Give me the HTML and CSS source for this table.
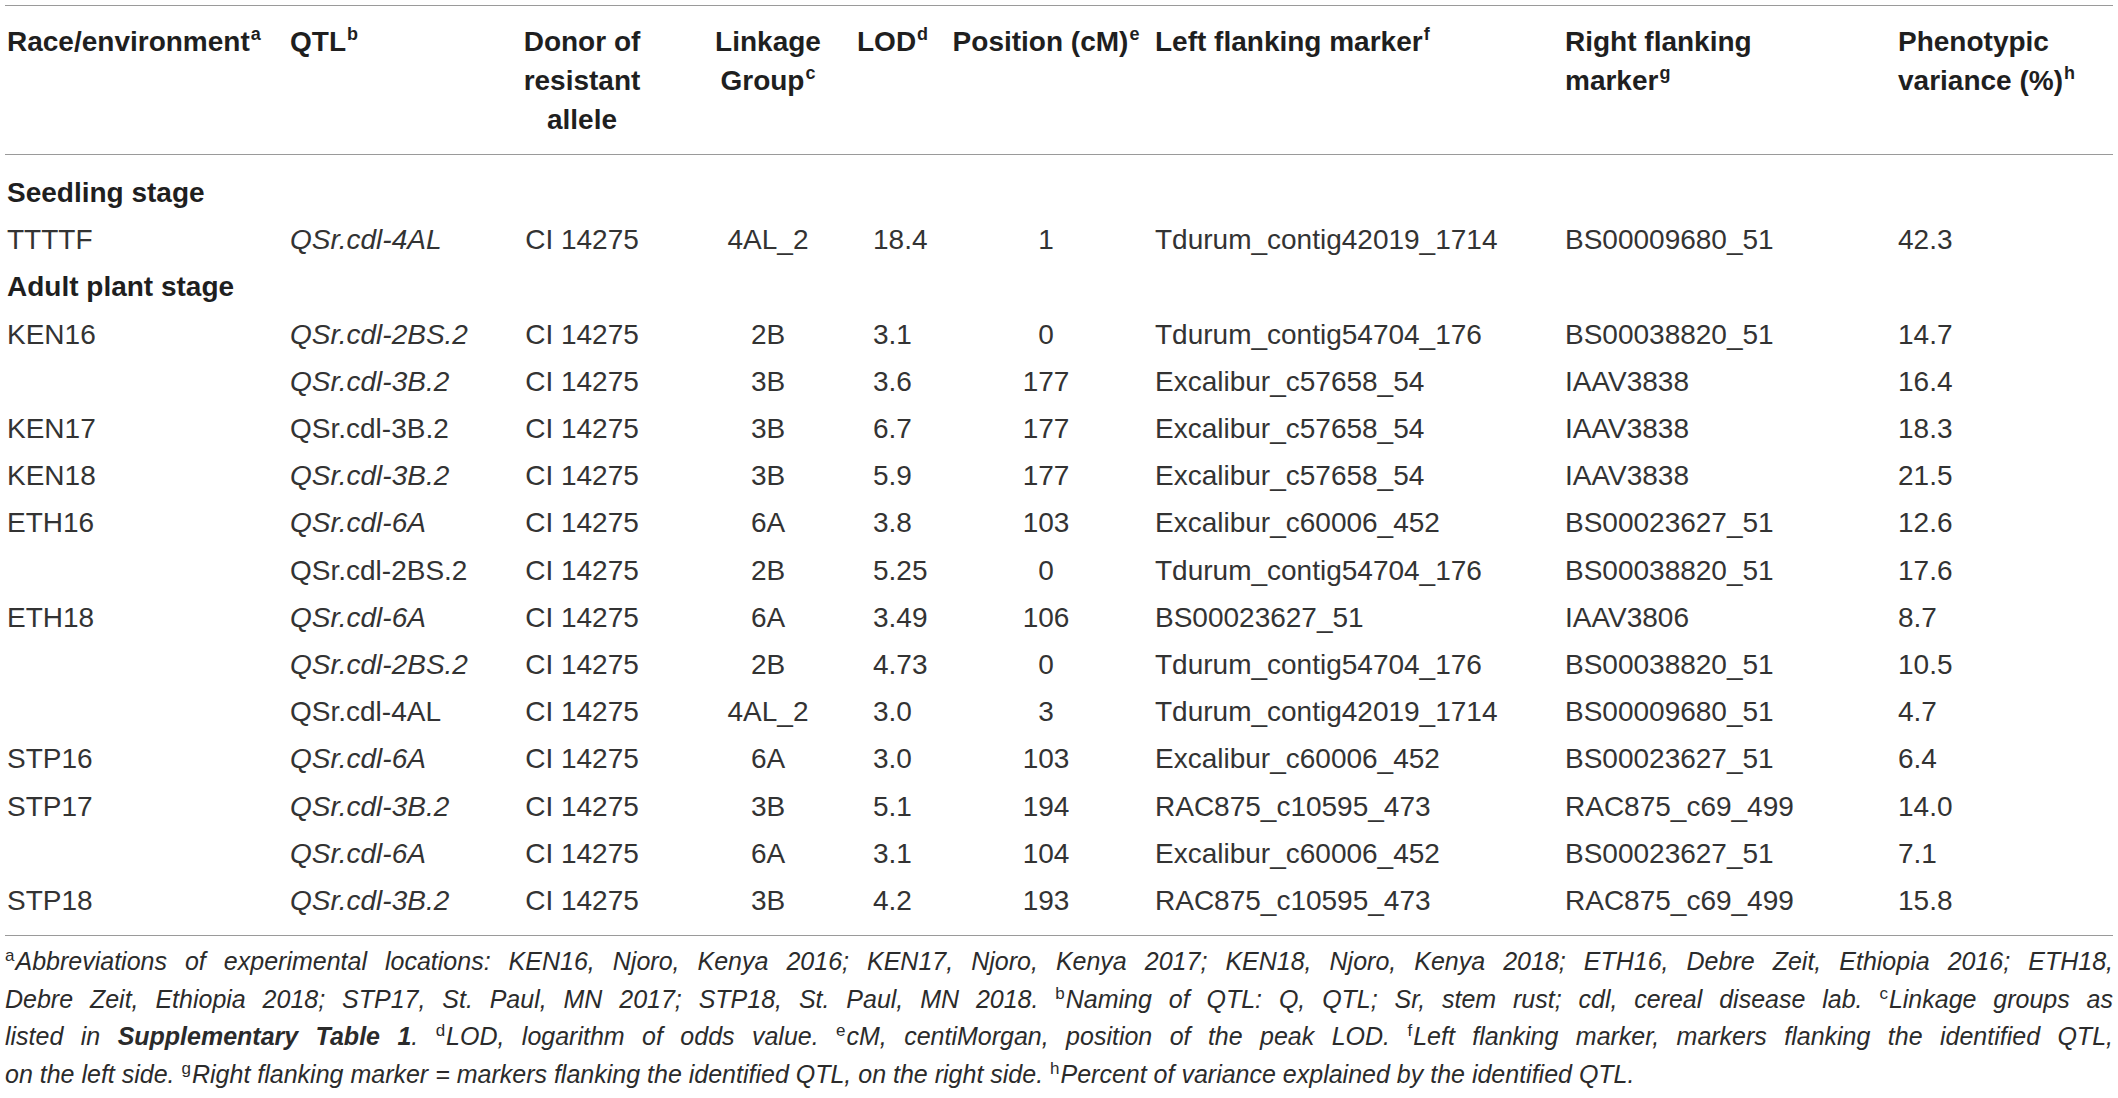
FILE: index.html
```html
<!DOCTYPE html>
<html>
  <head>
    <title>QTL for stem rust resistance</title>
    <link rel="stylesheet" href="styles.css">
  </head>
  <body>
    <table class="qtl">
      <colgroup>
        <col class="c-race">
        <col class="c-qtl">
        <col class="c-donor">
        <col class="c-group">
        <col class="c-lod">
        <col class="c-pos">
        <col class="c-left">
        <col class="c-right">
        <col class="c-var">
      </colgroup>
      <thead>
        <tr>
          <th class="race">Race/environment<sup>a</sup></th>
          <th class="qtlname">QTL<sup>b</sup></th>
          <th class="donor">Donor of<br>resistant<br>allele</th>
          <th class="group">Linkage<br>Group<sup>c</sup></th>
          <th class="lod">LOD<sup>d</sup></th>
          <th class="pos">Position (cM)<sup>e</sup></th>
          <th>Left flanking marker<sup>f</sup></th>
          <th>Right flanking<br>marker<sup>g</sup></th>
          <th>Phenotypic<br>variance (%)<sup>h</sup></th>
        </tr>
      </thead>
      <tbody>
        <tr class="first section"><td colspan="9" class="race">Seedling stage</td></tr>
        <tr>
          <td class="race">TTTTF</td><td class="qtlname"><i>QSr.cdl-4AL</i></td><td class="donor">CI 14275</td><td class="group">4AL_2</td><td class="lod">18.4</td><td class="pos">1</td><td>Tdurum_contig42019_1714</td><td>BS00009680_51</td><td>42.3</td>
        </tr>
        <tr class="section"><td colspan="9" class="race">Adult plant stage</td></tr>
        <tr>
          <td class="race">KEN16</td><td class="qtlname"><i>QSr.cdl-2BS.2</i></td><td class="donor">CI 14275</td><td class="group">2B</td><td class="lod">3.1</td><td class="pos">0</td><td>Tdurum_contig54704_176</td><td>BS00038820_51</td><td>14.7</td>
        </tr>
        <tr>
          <td class="race"></td><td class="qtlname"><i>QSr.cdl-3B.2</i></td><td class="donor">CI 14275</td><td class="group">3B</td><td class="lod">3.6</td><td class="pos">177</td><td>Excalibur_c57658_54</td><td>IAAV3838</td><td>16.4</td>
        </tr>
        <tr>
          <td class="race">KEN17</td><td class="qtlname">QSr.cdl-3B.2</td><td class="donor">CI 14275</td><td class="group">3B</td><td class="lod">6.7</td><td class="pos">177</td><td>Excalibur_c57658_54</td><td>IAAV3838</td><td>18.3</td>
        </tr>
        <tr>
          <td class="race">KEN18</td><td class="qtlname"><i>QSr.cdl-3B.2</i></td><td class="donor">CI 14275</td><td class="group">3B</td><td class="lod">5.9</td><td class="pos">177</td><td>Excalibur_c57658_54</td><td>IAAV3838</td><td>21.5</td>
        </tr>
        <tr>
          <td class="race">ETH16</td><td class="qtlname"><i>QSr.cdl-6A</i></td><td class="donor">CI 14275</td><td class="group">6A</td><td class="lod">3.8</td><td class="pos">103</td><td>Excalibur_c60006_452</td><td>BS00023627_51</td><td>12.6</td>
        </tr>
        <tr>
          <td class="race"></td><td class="qtlname">QSr.cdl-2BS.2</td><td class="donor">CI 14275</td><td class="group">2B</td><td class="lod">5.25</td><td class="pos">0</td><td>Tdurum_contig54704_176</td><td>BS00038820_51</td><td>17.6</td>
        </tr>
        <tr>
          <td class="race">ETH18</td><td class="qtlname"><i>QSr.cdl-6A</i></td><td class="donor">CI 14275</td><td class="group">6A</td><td class="lod">3.49</td><td class="pos">106</td><td>BS00023627_51</td><td>IAAV3806</td><td>8.7</td>
        </tr>
        <tr>
          <td class="race"></td><td class="qtlname"><i>QSr.cdl-2BS.2</i></td><td class="donor">CI 14275</td><td class="group">2B</td><td class="lod">4.73</td><td class="pos">0</td><td>Tdurum_contig54704_176</td><td>BS00038820_51</td><td>10.5</td>
        </tr>
        <tr>
          <td class="race"></td><td class="qtlname">QSr.cdl-4AL</td><td class="donor">CI 14275</td><td class="group">4AL_2</td><td class="lod">3.0</td><td class="pos">3</td><td>Tdurum_contig42019_1714</td><td>BS00009680_51</td><td>4.7</td>
        </tr>
        <tr>
          <td class="race">STP16</td><td class="qtlname"><i>QSr.cdl-6A</i></td><td class="donor">CI 14275</td><td class="group">6A</td><td class="lod">3.0</td><td class="pos">103</td><td>Excalibur_c60006_452</td><td>BS00023627_51</td><td>6.4</td>
        </tr>
        <tr>
          <td class="race">STP17</td><td class="qtlname"><i>QSr.cdl-3B.2</i></td><td class="donor">CI 14275</td><td class="group">3B</td><td class="lod">5.1</td><td class="pos">194</td><td>RAC875_c10595_473</td><td>RAC875_c69_499</td><td>14.0</td>
        </tr>
        <tr>
          <td class="race"></td><td class="qtlname"><i>QSr.cdl-6A</i></td><td class="donor">CI 14275</td><td class="group">6A</td><td class="lod">3.1</td><td class="pos">104</td><td>Excalibur_c60006_452</td><td>BS00023627_51</td><td>7.1</td>
        </tr>
        <tr class="last">
          <td class="race">STP18</td><td class="qtlname"><i>QSr.cdl-3B.2</i></td><td class="donor">CI 14275</td><td class="group">3B</td><td class="lod">4.2</td><td class="pos">193</td><td>RAC875_c10595_473</td><td>RAC875_c69_499</td><td>15.8</td>
        </tr>
      </tbody>
    </table>

    <p class="notes">
      <span class="line"><sup>a</sup>Abbreviations of experimental locations: KEN16, Njoro, Kenya 2016; KEN17, Njoro, Kenya 2017; KEN18, Njoro, Kenya 2018; ETH16, Debre Zeit, Ethiopia 2016; ETH18,</span>
      <span class="line">Debre Zeit, Ethiopia 2018; STP17, St. Paul, MN 2017; STP18, St. Paul, MN 2018. <sup>b</sup>Naming of QTL: Q, QTL; Sr, stem rust; cdl, cereal disease lab. <sup>c</sup>Linkage groups as</span>
      <span class="line">listed in <b>Supplementary Table 1</b>. <sup>d</sup>LOD, logarithm of odds value. <sup>e</sup>cM, centiMorgan, position of the peak LOD. <sup>f</sup>Left flanking marker, markers flanking the identified QTL,</span>
      <span class="line end">on the left side. <sup>g</sup>Right flanking marker = markers flanking the identified QTL, on the right side. <sup>h</sup>Percent of variance explained by the identified QTL.</span>
    </p>
  </body>
</html>
```

FILE: styles.css
```css
body {
  margin: 0;
  padding: 5px 5px 0;
  background: #fff;
  color: #333;
  font-family: "Liberation Sans", Arial, Helvetica, sans-serif;
}

.qtl {
  width: 2108px;
  table-layout: fixed;
  border-collapse: collapse;
  border-top: 1px solid #9a9a9a;
  border-bottom: 1px solid #9a9a9a;
  font-size: 28px;
}

.c-race { width: 280px; }
.c-qtl { width: 237px; }
.c-donor { width: 120px; }
.c-group { width: 215px; }
.c-lod { width: 90px; }
.c-pos { width: 208px; }
.c-left { width: 410px; }
.c-right { width: 333px; }
.c-var { width: 215px; }

.qtl th,
.qtl td {
  padding: 0;
  text-align: left;
  white-space: nowrap;
}

.qtl th {
  vertical-align: top;
  padding-top: 16px;
  padding-bottom: 15px;
  line-height: 39px;
  font-weight: bold;
  color: #1f1f1f;
  border-bottom: 1px solid #9a9a9a;
}

.qtl td {
  height: 47.2px;
  line-height: 47.2px;
  vertical-align: middle;
}

.qtl tr.first td {
  padding-top: 14px;
}

.qtl tr.last td {
  padding-bottom: 11px;
}

.qtl tr.section td {
  font-weight: bold;
  color: #1f1f1f;
}

.qtl .race { padding-left: 2px; }
.qtl .qtlname { padding-left: 5px; }
.qtl .donor { text-align: center; }
.qtl .group { text-align: center; padding-left: 37px; }
.qtl td.lod { padding-left: 16px; }
.qtl .pos { text-align: center; padding-right: 10px; }

.qtl sup {
  font-size: 18px;
  line-height: 0;
  vertical-align: 11px;
  margin-left: 1px;
}

.notes {
  margin: 7px 0 0;
  font-size: 25px;
  line-height: 37.5px;
  font-style: italic;
  color: #2b2b2b;
}

.notes .line {
  display: block;
  text-align: justify;
  text-align-last: justify;
  white-space: nowrap;
}

.notes .line.end {
  text-align-last: auto;
}

.notes sup {
  font-style: normal;
  font-size: 17px;
  line-height: 0;
  vertical-align: 9px;
  margin-right: 1px;
}

.notes b {
  font-weight: bold;
}
```
